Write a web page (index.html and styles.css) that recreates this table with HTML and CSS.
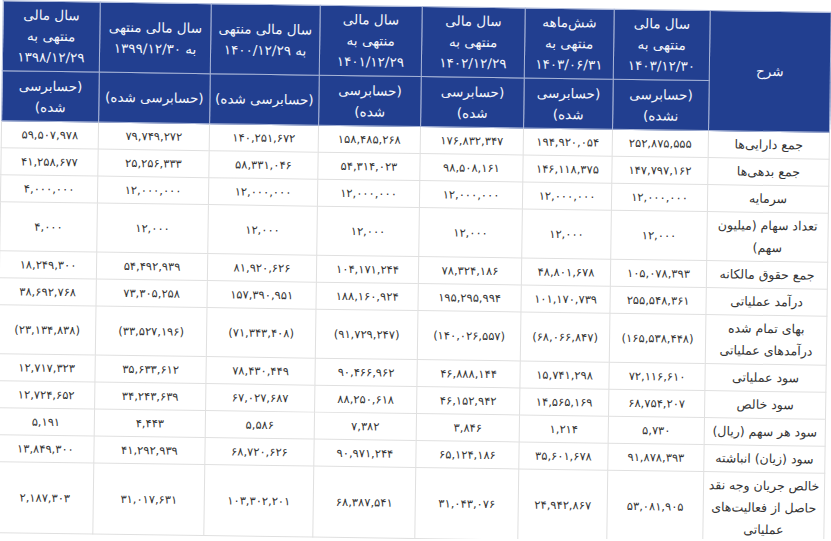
FILE: index.html
```html
<!DOCTYPE html>
<html lang="fa" dir="rtl">
<head>
<meta charset="utf-8">
<title>خلاصه اطلاعات مالی</title>
<link rel="stylesheet" href="styles.css">
</head>
<body>
<table class="fin">
  <colgroup>
    <col class="c-label">
    <col class="c-1403">
    <col class="c-1403h">
    <col class="c-1402">
    <col class="c-1401">
    <col class="c-1400">
    <col class="c-1399">
    <col class="c-1398">
  </colgroup>
  <thead>
    <tr class="h1">
      <th rowspan="2" class="lbl-h">شرح</th>
      <th>سال مالی<br>منتهی به<br>۱۴۰۳/۱۲/۳۰</th>
      <th>شش‌ماهه<br>منتهی به<br>۱۴۰۳/۰۶/۳۱</th>
      <th>سال مالی<br>منتهی به<br>۱۴۰۲/۱۲/۲۹</th>
      <th>سال مالی<br>منتهی به<br>۱۴۰۱/۱۲/۲۹</th>
      <th>سال مالی منتهی<br>به ۱۴۰۰/۱۲/۲۹</th>
      <th>سال مالی منتهی<br>به ۱۳۹۹/۱۲/۳۰</th>
      <th>سال مالی<br>منتهی به<br>۱۳۹۸/۱۲/۲۹</th>
    </tr>
    <tr class="h2">
      <th>(حسابرسی<br>نشده)</th>
      <th>(حسابرسی<br>شده)</th>
      <th>(حسابرسی<br>شده)</th>
      <th>(حسابرسی<br>شده)</th>
      <th>(حسابرسی شده)</th>
      <th>(حسابرسی شده)</th>
      <th>(حسابرسی<br>شده)</th>
    </tr>
  </thead>
  <tbody>
    <tr><td class="lbl">جمع دارایی‌ها</td><td>۲۵۲,۸۷۵,۵۵۵</td><td>۱۹۴,۹۲۰,۰۵۴</td><td>۱۷۶,۸۳۲,۳۴۷</td><td>۱۵۸,۴۸۵,۲۶۸</td><td>۱۴۰,۲۵۱,۶۷۲</td><td>۷۹,۷۴۹,۲۷۲</td><td>۵۹,۵۰۷,۹۷۸</td></tr>
    <tr><td class="lbl">جمع بدهی‌ها</td><td>۱۴۷,۷۹۷,۱۶۲</td><td>۱۴۶,۱۱۸,۳۷۵</td><td>۹۸,۵۰۸,۱۶۱</td><td>۵۴,۳۱۴,۰۲۳</td><td>۵۸,۳۳۱,۰۴۶</td><td>۲۵,۲۵۶,۳۳۳</td><td>۴۱,۲۵۸,۶۷۷</td></tr>
    <tr><td class="lbl">سرمایه</td><td>۱۲,۰۰۰,۰۰۰</td><td>۱۲,۰۰۰,۰۰۰</td><td>۱۲,۰۰۰,۰۰۰</td><td>۱۲,۰۰۰,۰۰۰</td><td>۱۲,۰۰۰,۰۰۰</td><td>۱۲,۰۰۰,۰۰۰</td><td>۴,۰۰۰,۰۰۰</td></tr>
    <tr><td class="lbl">تعداد سهام (میلیون<br>سهم)</td><td>۱۲,۰۰۰</td><td>۱۲,۰۰۰</td><td>۱۲,۰۰۰</td><td>۱۲,۰۰۰</td><td>۱۲,۰۰۰</td><td>۱۲,۰۰۰</td><td>۴,۰۰۰</td></tr>
    <tr><td class="lbl">جمع حقوق مالکانه</td><td>۱۰۵,۰۷۸,۳۹۳</td><td>۴۸,۸۰۱,۶۷۸</td><td>۷۸,۳۲۴,۱۸۶</td><td>۱۰۴,۱۷۱,۲۴۴</td><td>۸۱,۹۲۰,۶۲۶</td><td>۵۴,۴۹۲,۹۳۹</td><td>۱۸,۲۴۹,۳۰۰</td></tr>
    <tr><td class="lbl">درآمد عملیاتی</td><td>۲۵۵,۵۴۸,۳۶۱</td><td>۱۰۱,۱۷۰,۷۳۹</td><td>۱۹۵,۲۹۵,۹۹۴</td><td>۱۸۸,۱۶۰,۹۲۴</td><td>۱۵۷,۳۹۰,۹۵۱</td><td>۷۳,۳۰۵,۲۵۸</td><td>۳۸,۶۹۲,۷۶۸</td></tr>
    <tr><td class="lbl">بهای تمام شده<br>درآمدهای عملیاتی</td><td>(۱۶۵,۵۳۸,۴۴۸)</td><td>(۶۸,۰۶۶,۸۴۷)</td><td>(۱۴۰,۰۲۶,۵۵۷)</td><td>(۹۱,۷۲۹,۲۴۷)</td><td>(۷۱,۳۴۳,۴۰۸)</td><td>(۳۳,۵۲۷,۱۹۶)</td><td>(۲۳,۱۳۴,۸۳۸)</td></tr>
    <tr><td class="lbl">سود عملیاتی</td><td>۷۲,۱۱۶,۶۱۰</td><td>۱۵,۷۴۱,۲۹۸</td><td>۴۶,۸۸۸,۱۴۴</td><td>۹۰,۴۶۶,۹۶۲</td><td>۷۸,۴۳۰,۴۴۹</td><td>۳۵,۶۳۳,۶۱۲</td><td>۱۲,۷۱۷,۳۲۳</td></tr>
    <tr><td class="lbl">سود خالص</td><td>۶۸,۷۵۴,۲۰۷</td><td>۱۴,۵۶۵,۱۶۹</td><td>۴۶,۱۵۲,۹۴۲</td><td>۸۸,۲۵۰,۶۱۸</td><td>۶۷,۰۲۷,۶۸۷</td><td>۳۴,۲۴۳,۶۳۹</td><td>۱۲,۷۲۴,۶۵۲</td></tr>
    <tr><td class="lbl">سود هر سهم (ریال)</td><td>۵,۷۳۰</td><td>۱,۲۱۴</td><td>۳,۸۴۶</td><td>۷,۳۸۲</td><td>۵,۵۸۶</td><td>۴,۴۴۳</td><td>۵,۱۹۱</td></tr>
    <tr><td class="lbl">سود (زیان) انباشته</td><td>۹۱,۸۷۸,۳۹۳</td><td>۳۵,۶۰۱,۶۷۸</td><td>۶۵,۱۲۴,۱۸۶</td><td>۹۰,۹۷۱,۲۴۴</td><td>۶۸,۷۲۰,۶۲۶</td><td>۴۱,۲۹۲,۹۳۹</td><td>۱۳,۸۴۹,۳۰۰</td></tr>
    <tr><td class="lbl">خالص جریان وجه نقد<br>حاصل از فعالیت‌های<br>عملیاتی</td><td>۵۳,۰۸۱,۹۰۵</td><td>۲۴,۹۴۲,۸۶۷</td><td>۳۱,۰۴۳,۰۷۶</td><td>۶۸,۳۸۷,۵۴۱</td><td>۱۰۳,۳۰۲,۲۰۱</td><td>۳۱,۰۱۷,۶۳۱</td><td>۲,۱۸۷,۳۰۳</td></tr>
  </tbody>
</table>
</body>
</html>
```

FILE: styles.css
```css
html, body {
  margin: 0;
  padding: 0;
  background: #ffffff;
}

body {
  font-family: "DejaVu Sans", "Noto Sans", sans-serif;
  color: #333333;
  overflow: hidden;
}

.fin {
  margin: 6px 3px 0 0;
  width: 828px;
  border-collapse: collapse;
  table-layout: fixed;
  transform: rotate(0.8deg);
  transform-origin: 50% 50%;
}

.c-label { width: 121px; }
.c-1403 { width: 96px; }
.c-1403h { width: 89px; }
.c-1402 { width: 103px; }
.c-1401 { width: 102px; }
.c-1400 { width: 109px; }
.c-1399 { width: 111px; }
.c-1398 { width: 97px; }

.fin th {
  background: #223f90;
  color: #f4f6fb;
  font-weight: normal;
  font-size: 13.5px;
  line-height: 21px;
  text-align: center;
  vertical-align: middle;
  border: 1px solid #a9b6d8;
  padding: 0 1px;
  white-space: nowrap;
}

.fin .h1 th {
  height: 69px;
}

.fin .h2 th {
  height: 49px;
}

.fin .lbl-h {
  font-size: 13.5px;
}

.fin td {
  font-size: 11.5px;
  line-height: 22px;
  padding: 2px 2px;
  text-align: center;
  vertical-align: middle;
  border: 1px solid #e0e0e0;
  color: #363636;
  direction: ltr;
  white-space: nowrap;
}

.fin td.lbl {
  direction: rtl;
  font-size: 12.5px;
  color: #353535;
  white-space: nowrap;
}
```
